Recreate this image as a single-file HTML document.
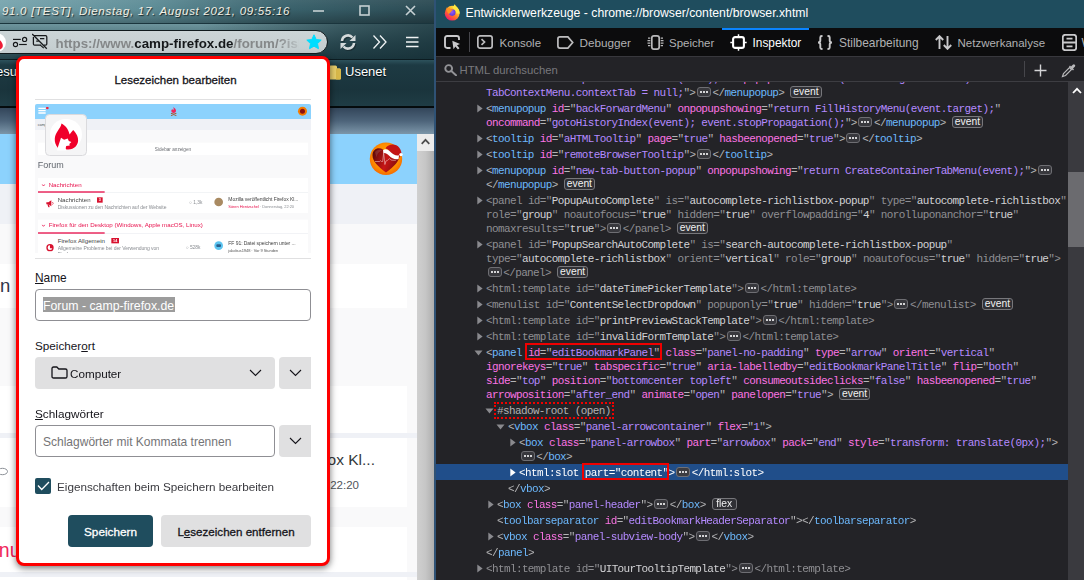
<!DOCTYPE html>
<html lang="de"><head><meta charset="utf-8"><title>Entwicklerwerkzeuge</title>
<style>
*{box-sizing:border-box}
html,body{margin:0;padding:0}
body{width:1084px;height:580px;overflow:hidden;position:relative;background:#232327;font-family:"Liberation Sans",sans-serif}
.abs,#left *,#dev *{position:absolute}
#left{position:absolute;left:0;top:0;width:434px;height:580px;overflow:hidden;background:#f9f9fa}
#gap{position:absolute;left:434px;top:0;width:2px;height:580px;background:#2f5275}
#dev{position:absolute;left:436px;top:0;width:648px;height:580px;overflow:hidden;background:#232327}
/* ---- left window chrome ---- */
#tbar{left:0;top:0;width:434px;height:24px;background:linear-gradient(90deg,#78a5ae 0%,#5d8c96 35%,#3a626c 65%,#2b4a53 100%)}
#tbar .sh{left:0;top:0;width:434px;height:24px;background:linear-gradient(180deg,rgba(255,255,255,.05) 0%,rgba(0,0,0,0) 40%,rgba(0,0,0,.28) 100%)}
#ttl{left:2px;top:3px;white-space:nowrap;font-style:italic;font-size:11.5px;line-height:16px;color:#f3f0e4;text-shadow:1px 1px 1px rgba(0,0,0,.7);letter-spacing:.71px}
#nav{left:0;top:23px;width:434px;height:37px;background:linear-gradient(180deg,#1a353d 0,#1a353d 1px,#6e959d 1px,#5f868e 7px,#3f636c 20px,#25434b 36px,#0c1c21 36px)}
#nav .rt{left:200px;top:1px;width:234px;height:35px;background:linear-gradient(90deg,rgba(20,45,52,0) 0%,rgba(20,45,52,.55) 60%,rgba(20,45,52,.75) 100%)}
#url{left:-20px;top:30px;width:348px;height:24px;border:1px solid #101a1d;border-radius:12px;background:linear-gradient(180deg,#ccd5d7,#c4cdcf)}
#urlt{left:55.5px;top:34.5px;white-space:nowrap;font-weight:bold;font-size:13.33px;line-height:18px;color:#858889;width:243px;overflow:hidden;-webkit-mask-image:linear-gradient(90deg,#000 0,#000 222px,rgba(0,0,0,.15) 243px);mask-image:linear-gradient(90deg,#000 0,#000 222px,rgba(0,0,0,.15) 243px)}
#urlt b{position:static;color:#15181a}
#bm{left:0;top:60px;width:434px;height:48px;background:linear-gradient(180deg,#2d525c 0,#1d3a43 5px,#1a343c 30px,#1f3c45 46px,#050b0d 46px)}
.bmt{white-space:nowrap;font-size:13px;line-height:16px;color:#fff;text-shadow:0 1px 1px rgba(0,0,0,.8)}
#tabs{left:0;top:108px;width:434px;height:26px;background:linear-gradient(180deg,#33465a 0,#4d647a 50%,#7c96a9 100%)}
/* ---- page ---- */
#hdr{left:0;top:134px;width:417px;height:50px;background:#8cd2fd}
#band{left:0;top:184px;width:417px;height:40px;background:#eff1f6}
.card{left:0;width:407px;background:#fff}
.gapb{left:0;width:417px;background:#eff1f6}
#sb{left:417px;top:134px;width:17px;height:446px;background:linear-gradient(90deg,#d0d0d0 0,#c6c6c6 50%,#aeaeae 100%)}
#sbu{left:417px;top:134px;width:17px;height:17px;background:#ececec}
/* ---- panel ---- */
#pnl{left:16px;top:56px;width:314px;height:510px;border:3px solid #fe0000;border-radius:8px;background:#fff;box-shadow:0 2px 7px rgba(0,0,0,.55)}
#pnl .lb{white-space:nowrap;font-size:13px;line-height:16px;color:#15141a}
#pnl u{position:static}
.sep{height:1px;background:#e0e0e1}
.inp{border:1px solid #8f8f94;border-radius:4px;background:#fff}
.gbtn{background:#e0e0e1}
/* ---- devtools ---- */
#dtb{left:0;top:0;width:648px;height:28px;background:#1f4d5e}
#dtt{left:29.5px;top:5.1px;white-space:nowrap;font-size:12.24px;line-height:16px;color:#fff}
#tool{left:0;top:28px;width:648px;height:29px;background:#0c0c0d;border-bottom:1px solid #38383d}
.tab{white-space:nowrap;font-size:12px;line-height:16px;top:35px;color:#b1b1b3}
#srch{left:0;top:57px;width:648px;height:25px;background:#232327;border-bottom:1px solid #3d3d42}
#mk{left:0;top:82px;width:632px;height:498px;overflow:hidden}
#mk .in{left:0;top:-82px;width:632px;height:580px}
.ln{white-space:pre;font-family:"Liberation Mono",monospace;font-size:11px;letter-spacing:-.62px;line-height:14px;height:14px;color:#b4b4b6}
.ln span{position:static!important}
.t{color:#6cb8fc}.a{color:#fb74e4}.v{color:#b48aff}
.hd,.hd .t,.hd .a{color:#8f8f93}.hd .v{color:#d2d2d5}
.sl,.sl .t,.sl .a,.sl .v{color:#fff}
.sr{color:#b1b1b3}
.bd{display:inline-block;font-family:"Liberation Sans",sans-serif;font-size:10.3px;letter-spacing:0;line-height:10px;height:12px;padding:0 2px;margin-left:0;border:1px solid #77777b;border-radius:3px;color:#f0f0f1;vertical-align:top;background:#303035}
.ln .el{display:inline-block;width:14px;height:10px;border:1px solid #6e6e73;border-radius:3px;margin:1px 1.7px 0 1.5px;vertical-align:top;position:relative!important;background:#38383d}
.el i{position:absolute;top:3px;width:2px;height:2px;background:#d4d4d6}
.el i:nth-child(1){left:2px}.el i:nth-child(2){left:5px}.el i:nth-child(3){left:8px}
.sl .el{border-color:#707075;background:#3c3c41}
.rbx{border:2px solid #f00000}
.selbg{left:0;width:632px;height:16px;background:#204e8a}
.tw{fill:#8a8a8e}.sw{fill:#fff}
#dsb{left:632px;top:82px;width:16px;height:498px;background:#3a3a3f}
#dth{left:632px;top:172px;width:16px;height:75px;background:#6b6b6f}
</style></head>
<body>
<div id="left">
<div id="tbar"><div class="sh"></div></div>
<div id="ttl">91.0 [TEST], Dienstag, 17. August 2021, 09:55:16</div>
<!-- window buttons -->
<svg style="left:312px;top:4px" width="110" height="16" viewBox="0 0 110 16" fill="none" stroke="#c6d0d3" stroke-width="1.600"><path d="M1 7h11"/><rect x="48" y="2" width="9" height="9"/><path d="M94 2l9 9M103 2l-9 9"/></svg>
<div id="nav"><div class="rt"></div></div>
<div id="url"></div>
<!-- site icon (partial) -->
<div style="left:-13.500px;top:33px;width:19px;height:19px;border-radius:10px;background:#fff"></div>
<svg style="left:-4.500px;top:39px" width="8" height="10.500" viewBox="0 0 9 13"><path d="M3 0c3 3 5 5 5 8.500c0 3-2 4.500-5 4.500c-4 0-5-3-5-5c0-3 3-4 5-8z" fill="#ee1d36"/></svg>
<!-- permissions icon -->
<svg style="left:12px;top:36px" width="16" height="12" viewBox="0 0 16 12" fill="none" stroke="#16191b" stroke-width="1.150"><path d="M1 3.400h7.800"/><circle cx="12.600" cy="3.400" r="2.100"/><circle cx="3.500" cy="8.500" r="2.100"/><path d="M7.100 8.500h7.700"/></svg>
<!-- blocked icon -->
<svg style="left:32px;top:33px" width="16" height="17" viewBox="0 0 16 17" fill="none" stroke="#16191b" stroke-width="1.250" stroke-linejoin="round"><path d="M2 2.700h11.600q1.200 0 1.200 1.200v7q0 1.200-1.200 1.200h-1.800"/><path d="M9 12.100H2.600q-1.200 0-1.200-1.200V3.900"/><path d="M8.300 12.100l3.500 3"/><path d="M8 5.500h4.300M4.200 8.200h2.600"/><path d="M.2 1l14.600 14.800"/></svg>
<div id="urlt">https://www.<b>camp-firefox.de</b>/forum/?isDesktop=1</div>
<!-- star -->
<svg style="left:306px;top:34px" width="16" height="16" viewBox="0 0 16 16"><path d="M8 .8l2.200 4.700 5 .6-3.700 3.500 1 5.100L8 12.200 3.500 14.700l1-5.100L.8 6.100l5-.6z" fill="#00ddff" stroke="#00ddff" stroke-width="1" stroke-linejoin="round"/></svg>
<!-- reload -->
<svg style="left:339px;top:33px" width="18" height="18" viewBox="0 0 18 18" fill="none"><g stroke="#16262b" stroke-width="3" opacity=".6" transform="translate(1 1)"><path d="M3 8a6 6 0 0 1 10.500-3.500"/><path d="M15 10a6 6 0 0 1-10.500 3.500"/></g><g stroke="#d5dadb" stroke-width="2.600"><path d="M3 8a6 6 0 0 1 10.500-3.500"/><path d="M15 10a6 6 0 0 1-10.500 3.500"/></g><path d="M16.500 2v6h-6z" fill="#d5dadb"/><path d="M1.500 16v-6h6z" fill="#d5dadb"/></svg>
<!-- chevrons -->
<svg style="left:372px;top:34px" width="16" height="16" viewBox="0 0 16 16" fill="none" stroke="#f0f3f4" stroke-width="1.300"><path d="M1.500 1.500l6 6.500-6 6.500"/><path d="M8 1.500l6 6.500-6 6.500"/></svg>
<!-- hamburger -->
<svg style="left:405px;top:35px" width="15" height="14" viewBox="0 0 15 14" stroke="#f0f3f4" stroke-width="1.400"><path d="M1 2.500h12.500M1 7h12.500M1 11.500h12.500"/></svg>
<div id="bm"></div>
<div class="bmt" style="left:-4px;top:64.300px">esucht</div>
<svg style="left:329px;top:64px" width="12" height="17" viewBox="0 0 12 17"><path d="M0 3q0-1.500 1.500-1.500h5q1.500 0 1.500 1.500v1.500h2.500q1.500 0 1.500 1.500v8q0 1.500-1.500 1.500h-10.500z" fill="#e9cf6a"/><path d="M7 4.500h3.500q1.500 0 1.500 1.500v8q0 1.500-1.500 1.500h-3.500z" fill="#d8b84a"/></svg>
<div class="bmt" style="left:345px;top:64.300px">Usenet</div>
<div id="tabs"></div>
<!-- page -->
<div id="hdr"></div>
<div id="band"></div>
<div class="card" style="top:264px;height:44px"></div>
<div class="abs" style="left:0;top:274.600px;font-size:18.500px;line-height:22px;color:#2f3447">n</div>
<div class="card" style="top:386px;height:47px"></div>
<div class="gapb" style="top:433px;height:5px"></div>
<div class="card" style="top:438px;height:69px"></div>
<div class="card" style="top:527px;height:45px"></div>
<div class="gapb" style="top:572px;height:5px"></div>
<div class="card" style="top:577px;height:10px"></div>
<svg style="left:-3px;top:467px" width="12" height="10" viewBox="0 0 12 10" fill="none" stroke="#8a8f96" stroke-width="1"><ellipse cx="5.500" cy="4.500" rx="5" ry="3.200"/></svg>
<div class="abs" style="left:-1.200px;top:537.500px;font-size:19.500px;line-height:24px;color:#f0245a">nu</div>
<div class="abs" style="left:300px;top:449px;width:75px;text-align:right;white-space:nowrap;font-size:15.5px;line-height:22px;color:#33373a">ox Kl...</div>
<div class="abs" style="left:300px;top:477px;width:59px;text-align:right;white-space:nowrap;font-size:11.5px;line-height:16px;color:#50555a">22:20</div>
<!-- avatar -->
<svg style="left:369px;top:142px" width="34" height="34" viewBox="0 0 34 34"><defs><radialGradient id="ag" cx=".5" cy=".45" r=".55"><stop offset="0" stop-color="#ffb000"/><stop offset=".7" stop-color="#ff9000"/><stop offset="1" stop-color="#f56c00"/></radialGradient><linearGradient id="hg" x1="0" y1="0" x2="1" y2=".3"><stop offset="0" stop-color="#4e0707"/><stop offset=".3" stop-color="#8c1010"/><stop offset=".6" stop-color="#c81616"/><stop offset="1" stop-color="#8a0e0e"/></linearGradient></defs><circle cx="17" cy="16.800" r="16.200" fill="url(#ag)"/><path d="M17 30.500C8.500 24 3.500 19 3.500 13.200C3.500 9 6.500 6.300 10 6.300c3 0 5.200 1.600 7 4.200c1.800-2.600 4-4.200 7-4.200c3.500 0 6.500 2.700 6.500 6.900C30.500 19 25.500 24 17 30.500z" fill="url(#hg)"/><path d="M6 10c2-2.500 5-3 7.500-1.500c-3 .5-5.500 3-6 7z" fill="#fff" opacity=".12"/><path d="M16.500 6.200C19.500 1.800 27 1.200 30.300 5.800C32.300 8.600 32.800 11 32.200 13.200L29.200 16.800C25.500 11.500 20.500 8.300 16.500 6.200Z" fill="#c41414"/><path d="M14 8.200C16.800 6.200 19.300 7.800 21.800 10.300C24.300 12.800 27 14 30 13.300L29.600 16.900C26 17.800 22.700 16.200 20.200 13.700C17.800 11.300 16.200 10.700 14.400 11.100Z" fill="#fff"/><circle cx="32" cy="12.600" r="1.700" fill="#fff"/><path d="M6 19.500h4.500l1-.8 1 .8h1.200l1-9 1.200 12 1-3.500 1.500-.5 2-2 1.500 1.500 2 .3h3" fill="none" stroke="#f4d4d4" stroke-width=".6" opacity=".9"/></svg>
<!-- scrollbar -->
<div id="sb"></div><div id="sbu"></div>
<svg style="left:421px;top:138px" width="9" height="7" viewBox="0 0 9 7" fill="none" stroke="#4c4c4c" stroke-width="1.700"><path d="M.7 5.800l3.800-4 3.800 4"/></svg>
<div id="pnl">
<div class="lb" id="ptitle" style="left:0;top:12.8px;width:313px;text-align:center;font-size:11.5px;-webkit-text-stroke:.3px #15141a">Lesezeichen bearbeiten</div>
<div class="sep" style="left:16px;top:40px;width:276px"></div>
<div id="thumb" style="left:16px;top:45px;width:276px;height:149px;overflow:hidden;background:#f9f9fa;border-radius:2px 2px 0 0">
<div id="th3" style="left:0;top:0;width:828px;height:447px;transform:scale(.33333);transform-origin:0 0;font-size:13px;color:#444">
<div style="left:0;top:0;width:828px;height:45px;background:#8cd2fd"></div>
<div style="left:0;top:45px;width:828px;height:33px;background:#eff1f6"></div>
<div style="left:8px;top:56px;font-size:11px;line-height:14px;color:#50555a">camp-fi</div>
<svg style="left:9px;top:8px" width="36" height="24" viewBox="0 0 36 24"><path d="M1 5h22M1 12h22M1 19h22" stroke="#fff" stroke-width="4"/><circle cx="28" cy="4" r="4" fill="#f0243c"/></svg>
<svg style="left:406px;top:9px" width="20" height="27" viewBox="0 0 20 27"><path d="M9 0c5 4 8 7 8 11.500c0 4-3 6.500-7 6.500s-7-2.500-7-6.500c0-2.500 1.500-4 3-5.500c.5 2 1.500 3 3 3.500c1.500-3 1-6 0-9.500z" fill="#f0245a"/><path d="M2 18.500l16 7M18 18.500l-16 7" stroke="#a8572e" stroke-width="3.500"/></svg>
<div style="left:789px;top:8px;width:27px;height:27px;border-radius:14px;background:#f47a00"></div>
<div style="left:795px;top:14px;width:15px;height:15px;border-radius:8px;background:#8a1010"></div>
<div style="left:9px;top:116px;width:810px;height:37px;background:#fff"></div>
<div style="left:9px;top:127px;width:810px;text-align:center;font-size:14px;line-height:16px;color:#6a6d72">Sidebar anzeigen</div>
<div style="left:8px;top:168px;font-size:27px;line-height:32px;color:#62676e">Forum</div>
<!-- section 1 -->
<div style="left:9px;top:222px;width:810px;height:105px;background:#fff"></div>
<div style="left:9px;top:264px;width:810px;height:2px;background:#eceef2"></div>
<div style="left:9px;top:262px;width:200px;height:4px;background:#e8124d"></div>
<svg style="left:20px;top:240px" width="11" height="8" viewBox="0 0 11 8" fill="none" stroke="#e8124d" stroke-width="2.500"><path d="M1 1l4.500 5L10 1"/></svg>
<div style="left:41px;top:233px;font-size:18.5px;line-height:20px;color:#e8124d;white-space:nowrap">Nachrichten</div>
<svg style="left:32px;top:287px" width="26" height="24" viewBox="0 0 26 24" fill="#d8122f"><path d="M2 8h6l9-6v18l-9-6H2z"/><path d="M5 14h5l2 9H8z"/><path d="M20 7a5 5 0 0 1 0 8" fill="none" stroke="#d8122f" stroke-width="2"/></svg>
<div style="left:68px;top:278px;font-size:18.5px;line-height:20px;color:#444;white-space:nowrap">Nachrichten</div>
<div style="left:186px;top:280px;width:17px;height:16px;background:#d8122f;color:#fff;font-size:11px;line-height:16px;text-align:center;font-weight:bold">3</div>
<div style="left:68px;top:301px;font-size:15.2px;line-height:16px;color:#8a8d92;white-space:nowrap;letter-spacing:-.2px">Diskussionen zu den Nachrichten auf der Website</div>
<div style="left:462px;top:287px;font-size:14.500px;line-height:16px;color:#8a8d92;white-space:nowrap">○ 1,3k</div>
<div style="left:538px;top:281px;width:26px;height:26px;border-radius:13px;background:#a98a62"></div>
<div style="left:580px;top:277px;font-size:15.1px;line-height:16px;color:#444;white-space:nowrap;letter-spacing:-.2px">Mozilla veröffentlicht Firefox Kl...</div>
<div style="left:580px;top:300px;font-size:12px;line-height:14px;color:#8a8d92;white-space:nowrap;letter-spacing:-.2px"><span style="position:static;color:#e8124d">Sören Hentzschel</span> · Donnerstag, 22:20</div>
<!-- section 2 -->
<div style="left:9px;top:347px;width:810px;height:110px;background:#fff"></div>
<div style="left:9px;top:388px;width:810px;height:2px;background:#eceef2"></div>
<div style="left:9px;top:385px;width:200px;height:4px;background:#e8124d"></div>
<svg style="left:20px;top:361px" width="11" height="8" viewBox="0 0 11 8" fill="none" stroke="#e8124d" stroke-width="2.500"><path d="M1 1l4.500 5L10 1"/></svg>
<div style="left:41px;top:354px;font-size:18.5px;line-height:20px;color:#e8124d;white-space:nowrap">Firefox für den Desktop (Windows, Apple macOS, Linux)</div>
<svg style="left:32.500px;top:419px" width="24" height="24" viewBox="0 0 24 24"><circle cx="12" cy="12" r="11" fill="#d8122f"/><path d="M12 5a7 7 0 1 0 7 7c-2 3-6 3-7 0c-1-3 1-5 0-7z" fill="#fff"/></svg>
<div style="left:68px;top:400px;font-size:18.5px;line-height:20px;color:#444;white-space:nowrap">Firefox Allgemein</div>
<div style="left:229px;top:402px;width:23px;height:16px;background:#d8122f;color:#fff;font-size:11px;line-height:16px;text-align:center;font-weight:bold">14</div>
<div style="left:68px;top:424px;font-size:15.2px;line-height:16px;color:#8a8d92;white-space:nowrap;letter-spacing:-.2px">Allgemeine Probleme bei der Verwendung von</div>
<div style="left:68px;top:444px;font-size:15.2px;line-height:16px;color:#8a8d92;white-space:nowrap">Firefox</div>
<div style="left:452px;top:423px;font-size:14.500px;line-height:16px;color:#8a8d92;white-space:nowrap">○ 528k</div>
<div style="left:538px;top:412px;width:26px;height:26px;border-radius:13px;background:#5cc4f0"></div>
<div style="left:544px;top:421px;width:14px;height:8px;border-radius:3px;background:#2a5f8c"></div>
<div style="left:580px;top:411px;font-size:15.1px;line-height:16px;color:#444;white-space:nowrap;letter-spacing:-.2px">FF 91: Datei speichern unter ...</div>
<div style="left:580px;top:434px;font-size:12px;line-height:14px;color:#555;white-space:nowrap;letter-spacing:-.2px">jakobus1948 · Vor 9 Stunden</div>
</div>
<!-- favicon box -->
<div style="left:10.200px;top:10.200px;width:41.800px;height:41.600px;border:1px solid #dadadd;border-radius:4.500px;background:#f5f5f6"></div>
<div style="left:15.300px;top:14.800px;width:31.500px;height:31.500px;border-radius:16px;background:#fff"></div>
<svg style="left:19px;top:19px" width="26" height="28" viewBox="0 0 26 28"><path d="M7.500 .6C11 2.500 14.500 6 15.600 11.500C16.500 10 18 8.500 19.200 7C21.500 9.500 24.300 13 24.100 17.500C24 22 20.500 26.400 14.300 26.400C10 26.600 6 26 3.700 24.800C1.500 22 .5 19 .8 15.300C1.500 9 6.500 6 7.500 .6Z" fill="#f0002a"/><path d="M3.700 24.800L7 14.700L10.100 16.800L13.700 15.500L14.800 17.900L17.400 18.900L15.300 21L15.800 22.500L12.200 23L11.700 25.300L12.500 27.500L3 27.500Z" fill="#fff"/></svg>

</div>
<div class="sep" style="left:16px;top:199px;width:276px"></div>
<div class="lb" id="l1" style="left:16px;top:210.9px;font-size:11.88px"><u>N</u>ame</div>
<div class="inp" style="left:16px;top:230px;width:276px;height:32px"></div>
<div style="left:24px;top:238px;width:131.500px;height:15px;background:#9c9c9c"></div>
<div class="lb" id="l2" style="left:24px;top:238.9px;color:#fff;font-size:12.3px">Forum - camp-firefox.de</div>
<div class="lb" id="l3" style="left:16px;top:278.9px;font-size:11.73px">Speicher<u>o</u>rt</div>
<div class="gbtn" style="left:16px;top:298px;width:240px;height:32px;border-radius:4px"></div>
<svg style="left:32px;top:306.700px" width="17" height="13" viewBox="0 0 17 13" fill="none" stroke="#15141a" stroke-width="1.300"><path d="M1 2.600q0-1.600 1.600-1.600h3.200l2 2h6.600q1.600 0 1.600 1.600v5.800q0 1.600-1.600 1.600h-11.800q-1.600 0-1.600-1.600z"/></svg>
<div class="lb" id="l4" style="left:51px;top:306.85px;font-size:11.68px">Computer</div>
<svg style="left:230px;top:310px" width="13" height="8" viewBox="0 0 13 8" fill="none" stroke="#15141a" stroke-width="1.100"><path d="M1 1l5.500 5.500L12 1"/></svg>
<div class="gbtn" style="left:260px;top:298px;width:32px;height:32px;border-radius:4px 0 0 4px"></div>
<svg style="left:269.500px;top:310px" width="13" height="8" viewBox="0 0 13 8" fill="none" stroke="#15141a" stroke-width="1.100"><path d="M1 1l5.500 5.500L12 1"/></svg>
<div class="lb" id="l5" style="left:16px;top:346.8px;font-size:11.77px"><u>S</u>chlagwörter</div>
<div class="inp" style="left:16px;top:366px;width:240px;height:32px"></div>
<div class="lb" id="l6" style="left:24px;top:374.7px;color:#747476;font-size:12.02px">Schlagwörter mit Kommata trennen</div>
<div class="gbtn" style="left:260px;top:366px;width:32px;height:32px;border-radius:4px 0 0 4px"></div>
<svg style="left:269.500px;top:378px" width="13" height="8" viewBox="0 0 13 8" fill="none" stroke="#15141a" stroke-width="1.100"><path d="M1 1l5.500 5.500L12 1"/></svg>
<div style="left:16px;top:419px;width:16px;height:16px;border-radius:2px;background:#1f4d5e"></div>
<svg style="left:17.500px;top:422px" width="13" height="10" viewBox="0 0 13 10" fill="none" stroke="#fff" stroke-width="1.300"><path d="M1 4.500l3.700 4L12 1"/></svg>
<div class="lb" id="l7" style="left:38px;top:420.25px;color:#3a3a3f;font-size:11.7px">Ei<u>g</u>enschaften beim Speichern bearbeiten</div>
<div style="left:49px;top:456px;width:85px;height:32px;border-radius:4px;background:#1f4d5e"></div>
<div class="lb" id="l8" style="left:49px;top:465px;width:85px;text-align:center;color:#fff;-webkit-text-stroke:.3px #fff;font-size:11.75px">Speichern</div>
<div class="gbtn" style="left:142px;top:456px;width:150px;height:32px;border-radius:4px"></div>
<div class="lb" id="l9" style="left:142px;top:465px;width:150px;text-align:center;-webkit-text-stroke:.3px #15141a;font-size:11.59px">L<u>e</u>sezeichen entfernen</div>
</div>


</div>
<div id="gap"></div>
<div id="dev">
<div id="dtb"></div>
<!-- firefox logo -->
<svg style="left:8px;top:3.500px" width="17" height="17" viewBox="0 0 17 17"><defs><linearGradient id="fx1" x1=".95" y1=".1" x2=".25" y2="1"><stop offset="0" stop-color="#fff44f"/><stop offset=".3" stop-color="#ffc12e"/><stop offset=".6" stop-color="#ff6d2a"/><stop offset="1" stop-color="#f5136f"/></linearGradient><radialGradient id="fx2" cx=".45" cy=".4" r=".6"><stop offset="0" stop-color="#9a5cf5"/><stop offset="1" stop-color="#5a38de"/></radialGradient></defs><circle cx="8.200" cy="9.200" r="7.400" fill="url(#fx1)"/><path d="M10.600 .3C12 2.500 15.800 4.500 15.800 9.500L12.500 9.500C12.500 6.500 9.200 5.500 8.600 3.200C9.200 2.200 10.200 1.300 10.600 .3Z" fill="#ffe640"/><circle cx="8.200" cy="8.600" r="3.300" fill="url(#fx2)"/><path d="M2.400 3.500L4.200 4.500L5.400 4C6.200 5.200 7.700 5.400 9.400 5.600C8.800 6.800 7.400 6.600 7.200 7.800L5 10C3.200 8.500 2.600 6 2.400 3.500Z" fill="#ff9422"/></svg>
<div id="dtt">Entwicklerwerkzeuge - chrome://browser/content/browser.xhtml</div>
<div id="tool"></div>
<div style="left:286px;top:28px;width:87px;height:2px;background:#0a84ff"></div>
<!-- picker -->
<svg style="left:8px;top:35px" width="17" height="15" viewBox="0 0 17 15" fill="none"><path d="M6.500 13H3.200Q1 13 1 10.800V3.200Q1 1 3.200 1h9.600Q15 1 15 3.200V5" stroke="#c9c9cb" stroke-width="1.900"/><path d="M8.300 5.800l7.700 3.300-3 1.200 2.500 3-1.600 1.300-2.500-3-1.900 2.700z" fill="#c9c9cb"/></svg>
<div style="left:32.500px;top:32px;width:1px;height:20px;background:#46464b"></div>
<!-- console -->
<svg style="left:41px;top:35px" width="16" height="14" viewBox="0 0 16 14" fill="none" stroke="#bdbdbf" stroke-width="1.700"><rect x=".85" y=".85" width="14.300" height="12.300" rx="2.200"/><path d="M4.500 4.200l3 2.800-3 2.800"/></svg>
<div class="tab" id="t1" style="left:63.500px;font-size:11.5px">Konsole</div>
<!-- debugger -->
<svg style="left:120.500px;top:35.500px" width="17" height="13" viewBox="0 0 17 13" fill="none" stroke="#bdbdbf" stroke-width="1.700"><path d="M2.900.9h8l4.800 5.600-4.800 5.600H2.900q-2 0-2-2V2.900q0-2 2-2z"/></svg>
<div class="tab" id="t2" style="left:143.500px;font-size:11.72px">Debugger</div>
<!-- memory -->
<svg style="left:211px;top:35px" width="17" height="15" viewBox="0 0 17 15" fill="none" stroke="#b9b9bb"><rect x="4.800" y=".9" width="7.400" height="13.200" rx="2.200" stroke-width="1.700"/><path d="M1 3.200h2.300M.5 5.700h2.800M.5 8.200h2.800M1 10.700h2.300M13.700 3.200h2.300M13.700 5.700h2.800M13.700 8.200h2.800M13.700 10.700h2.300" stroke-width="1.200"/></svg>
<div class="tab" id="t3" style="left:233px;font-size:11.47px">Speicher</div>
<!-- inspector -->
<svg style="left:294px;top:34px" width="17" height="17" viewBox="0 0 17 17" fill="none" stroke="#fff"><rect x="3.100" y="3.100" width="10.800" height="10.800" rx="2" stroke-width="2.100"/><path d="M8.500 .3v2.500M8.500 14.200v2.500M.3 8.500h2.500M14.200 8.500h2.500" stroke-width="1.500"/></svg>
<div class="tab" id="t4" style="left:316.500px;color:#fff;font-size:11.86px">Inspektor</div>
<!-- style editor -->
<svg style="left:381px;top:35px" width="16" height="15" viewBox="0 0 16 15" fill="none" stroke="#c9c9cb" stroke-width="1.900"><path d="M5.500 1H4.800Q3.300 1 3.300 2.500v3Q3.300 7.500 1 7.500Q3.300 7.500 3.300 9.500v3Q3.300 14 4.800 14h.7"/><path d="M10.500 1h.7q1.500 0 1.500 1.500v3q0 2 2.300 2q-2.300 0-2.300 2v3q0 1.500-1.500 1.500h-.7"/></svg>
<div class="tab" id="t5" style="left:403px;font-size:11.95px">Stilbearbeitung</div>
<!-- network -->
<svg style="left:499px;top:35px" width="17" height="15" viewBox="0 0 17 15" fill="none" stroke="#c9c9cb" stroke-width="1.900"><path d="M4.500 14V1.500M.8 5l3.700-3.800L8.200 5"/><path d="M12.500 1v12.500M8.800 10l3.700 3.800 3.700-3.800"/></svg>
<div class="tab" id="t6" style="left:521.500px;font-size:11.5px">Netzwerkanalyse</div>
<!-- storage -->
<svg style="left:626px;top:34px" width="15" height="17" viewBox="0 0 15 17" fill="none" stroke="#c9c9cb" stroke-width="1.800"><rect x=".8" y=".8" width="13.400" height="15.400" rx="2.500"/><path d="M.8 8.500h13.400M4.500 4.600h6M4.500 12.400h6"/></svg>
<div class="tab" style="left:645.500px">Web-Speicher</div>
<div id="srch"></div>
<svg style="left:8px;top:64px" width="13" height="12" viewBox="0 0 13 12" fill="none" stroke="#939397" stroke-width="1.900"><circle cx="4.700" cy="4.500" r="3.400"/><path d="M7.300 7l4.700 4.300" stroke-linecap="round"/></svg>
<div class="tab" id="t7" style="left:23.500px;top:62.4px;color:#78787d;font-size:11.32px">HTML durchsuchen</div>
<div style="left:588px;top:61px;width:1px;height:16px;background:#46464b"></div>
<svg style="left:598px;top:64px" width="13" height="13" viewBox="0 0 13 13" stroke="#d4d4d6" stroke-width="1.400"><path d="M6.500 .5v12M.5 6.500h12"/></svg>
<svg style="left:625px;top:63px" width="15" height="15" viewBox="0 0 15 15" fill="none"><path d="M1.500 13.500l1-3 6-6 2 2-6 6z" stroke="#b9b9bb" stroke-width="1.200"/><path d="M8 3.500l1-1 1 1 1.800-1.800q1-1 2 0t0 2L12 5.500l1 1-1 1z" fill="#b9b9bb"/></svg>
<div id="mk"><div class="in">
<div class="ln" style="left:50.0px;top:72px"><span class="v">TabContextMenu.updateContextMenu(this);</span>&quot; <span class="a">onpopuphidden</span>=&quot;<span class="v">if (event.target == this)</span></div>
<div class="ln" style="left:50.0px;top:86px"><span class="v">TabContextMenu.contextTab = null;</span>&quot;&gt;<span class="el"><i></i><i></i><i></i></span>&lt;/<span class="t">menupopup</span>&gt; <span class="bd">event</span></div>
<svg class="tw" style="left:40.7px;top:103.6px" width="6" height="9" viewBox="0 0 6 9"><path d="M0.3 0.4 L5.6 4.5 L0.3 8.6Z"/></svg>
<div class="ln" style="left:50.0px;top:102px">&lt;<span class="t">menupopup</span> <span class="a">id</span>=&quot;<span class="v">backForwardMenu</span>&quot; <span class="a">onpopupshowing</span>=&quot;<span class="v">return FillHistoryMenu(event.target);</span>&quot;</div>
<div class="ln" style="left:50.0px;top:116px"><span class="a">oncommand</span>=&quot;<span class="v">gotoHistoryIndex(event); event.stopPropagation();</span>&quot;&gt;<span class="el"><i></i><i></i><i></i></span>&lt;/<span class="t">menupopup</span>&gt; <span class="bd">event</span></div>
<svg class="tw" style="left:40.7px;top:133.6px" width="6" height="9" viewBox="0 0 6 9"><path d="M0.3 0.4 L5.6 4.5 L0.3 8.6Z"/></svg>
<div class="ln" style="left:50.0px;top:132px">&lt;<span class="t">tooltip</span> <span class="a">id</span>=&quot;<span class="v">aHTMLTooltip</span>&quot; <span class="a">page</span>=&quot;<span class="v">true</span>&quot; <span class="a">hasbeenopened</span>=&quot;<span class="v">true</span>&quot;&gt;<span class="el"><i></i><i></i><i></i></span>&lt;/<span class="t">tooltip</span>&gt;</div>
<svg class="tw" style="left:40.7px;top:149.6px" width="6" height="9" viewBox="0 0 6 9"><path d="M0.3 0.4 L5.6 4.5 L0.3 8.6Z"/></svg>
<div class="ln" style="left:50.0px;top:148px">&lt;<span class="t">tooltip</span> <span class="a">id</span>=&quot;<span class="v">remoteBrowserTooltip</span>&quot;&gt;<span class="el"><i></i><i></i><i></i></span>&lt;/<span class="t">tooltip</span>&gt;</div>
<svg class="tw" style="left:40.7px;top:165.6px" width="6" height="9" viewBox="0 0 6 9"><path d="M0.3 0.4 L5.6 4.5 L0.3 8.6Z"/></svg>
<div class="ln" style="left:50.0px;top:164px">&lt;<span class="t">menupopup</span> <span class="a">id</span>=&quot;<span class="v">new-tab-button-popup</span>&quot; <span class="a">onpopupshowing</span>=&quot;<span class="v">return CreateContainerTabMenu(event);</span>&quot;&gt;<span class="el"><i></i><i></i><i></i></span></div>
<div class="ln" style="left:50.0px;top:178px">&lt;/<span class="t">menupopup</span>&gt; <span class="bd">event</span></div>
<svg class="tw" style="left:40.7px;top:195.6px" width="6" height="9" viewBox="0 0 6 9"><path d="M0.3 0.4 L5.6 4.5 L0.3 8.6Z"/></svg>
<div class="ln hd" style="left:50.0px;top:194px">&lt;<span class="t">panel</span> <span class="a">id</span>=&quot;<span class="v">PopupAutoComplete</span>&quot; <span class="a">is</span>=&quot;<span class="v">autocomplete-richlistbox-popup</span>&quot; <span class="a">type</span>=&quot;<span class="v">autocomplete-richlistbox</span>&quot;</div>
<div class="ln hd" style="left:50.0px;top:208px"><span class="a">role</span>=&quot;<span class="v">group</span>&quot; <span class="a">noautofocus</span>=&quot;<span class="v">true</span>&quot; <span class="a">hidden</span>=&quot;<span class="v">true</span>&quot; <span class="a">overflowpadding</span>=&quot;<span class="v">4</span>&quot; <span class="a">norolluponanchor</span>=&quot;<span class="v">true</span>&quot;</div>
<div class="ln hd" style="left:50.0px;top:222px"><span class="a">nomaxresults</span>=&quot;<span class="v">true</span>&quot;&gt;<span class="el"><i></i><i></i><i></i></span>&lt;/<span class="t">panel</span>&gt; <span class="bd">event</span></div>
<svg class="tw" style="left:40.7px;top:239.6px" width="6" height="9" viewBox="0 0 6 9"><path d="M0.3 0.4 L5.6 4.5 L0.3 8.6Z"/></svg>
<div class="ln hd" style="left:50.0px;top:238px">&lt;<span class="t">panel</span> <span class="a">id</span>=&quot;<span class="v">PopupSearchAutoComplete</span>&quot; <span class="a">is</span>=&quot;<span class="v">search-autocomplete-richlistbox-popup</span>&quot;</div>
<div class="ln hd" style="left:50.0px;top:252px"><span class="a">type</span>=&quot;<span class="v">autocomplete-richlistbox</span>&quot; <span class="a">orient</span>=&quot;<span class="v">vertical</span>&quot; <span class="a">role</span>=&quot;<span class="v">group</span>&quot; <span class="a">noautofocus</span>=&quot;<span class="v">true</span>&quot; <span class="a">hidden</span>=&quot;<span class="v">true</span>&quot;&gt;</div>
<div class="ln hd" style="left:50.0px;top:266px"><span class="el"><i></i><i></i><i></i></span>&lt;/<span class="t">panel</span>&gt; <span class="bd">event</span></div>
<svg class="tw" style="left:40.7px;top:283.6px" width="6" height="9" viewBox="0 0 6 9"><path d="M0.3 0.4 L5.6 4.5 L0.3 8.6Z"/></svg>
<div class="ln hd" style="left:50.0px;top:282px">&lt;<span class="t">html:template</span> <span class="a">id</span>=&quot;<span class="v">dateTimePickerTemplate</span>&quot;&gt;<span class="el"><i></i><i></i><i></i></span>&lt;/<span class="t">html:template</span>&gt;</div>
<svg class="tw" style="left:40.7px;top:299.6px" width="6" height="9" viewBox="0 0 6 9"><path d="M0.3 0.4 L5.6 4.5 L0.3 8.6Z"/></svg>
<div class="ln hd" style="left:50.0px;top:298px">&lt;<span class="t">menulist</span> <span class="a">id</span>=&quot;<span class="v">ContentSelectDropdown</span>&quot; <span class="a">popuponly</span>=&quot;<span class="v">true</span>&quot; <span class="a">hidden</span>=&quot;<span class="v">true</span>&quot;&gt;<span class="el"><i></i><i></i><i></i></span>&lt;/<span class="t">menulist</span>&gt; <span class="bd">event</span></div>
<svg class="tw" style="left:40.7px;top:315.6px" width="6" height="9" viewBox="0 0 6 9"><path d="M0.3 0.4 L5.6 4.5 L0.3 8.6Z"/></svg>
<div class="ln hd" style="left:50.0px;top:314px">&lt;<span class="t">html:template</span> <span class="a">id</span>=&quot;<span class="v">printPreviewStackTemplate</span>&quot;&gt;<span class="el"><i></i><i></i><i></i></span>&lt;/<span class="t">html:template</span>&gt;</div>
<svg class="tw" style="left:40.7px;top:331.6px" width="6" height="9" viewBox="0 0 6 9"><path d="M0.3 0.4 L5.6 4.5 L0.3 8.6Z"/></svg>
<div class="ln hd" style="left:50.0px;top:330px">&lt;<span class="t">html:template</span> <span class="a">id</span>=&quot;<span class="v">invalidFormTemplate</span>&quot;&gt;<span class="el"><i></i><i></i><i></i></span>&lt;/<span class="t">html:template</span>&gt;</div>
<svg class="tw" style="left:38.0px;top:349.6px" width="9" height="6" viewBox="0 0 9 6"><path d="M0.5 0.5 L8.5 0.5 L4.5 5.5Z"/></svg>
<div class="ln" style="left:50.0px;top:346px">&lt;<span class="t">panel</span> <span><span class="a">id</span>=&quot;<span class="v">editBookmarkPanel</span>&quot;</span> <span class="a">class</span>=&quot;<span class="v">panel-no-padding</span>&quot; <span class="a">type</span>=&quot;<span class="v">arrow</span>&quot; <span class="a">orient</span>=&quot;<span class="v">vertical</span>&quot;</div>
<div class="ln" style="left:50.0px;top:360px"><span class="a">ignorekeys</span>=&quot;<span class="v">true</span>&quot; <span class="a">tabspecific</span>=&quot;<span class="v">true</span>&quot; <span class="a">aria-labelledby</span>=&quot;<span class="v">editBookmarkPanelTitle</span>&quot; <span class="a">flip</span>=&quot;<span class="v">both</span>&quot;</div>
<div class="ln" style="left:50.0px;top:374px"><span class="a">side</span>=&quot;<span class="v">top</span>&quot; <span class="a">position</span>=&quot;<span class="v">bottomcenter topleft</span>&quot; <span class="a">consumeoutsideclicks</span>=&quot;<span class="v">false</span>&quot; <span class="a">hasbeenopened</span>=&quot;<span class="v">true</span>&quot;</div>
<div class="ln" style="left:50.0px;top:388px"><span class="a">arrowposition</span>=&quot;<span class="v">after_end</span>&quot; <span class="a">animate</span>=&quot;<span class="v">open</span>&quot; <span class="a">panelopen</span>=&quot;<span class="v">true</span>&quot;&gt; <span class="bd">event</span></div>
<svg class="tw" style="left:49.0px;top:407.6px" width="9" height="6" viewBox="0 0 9 6"><path d="M0.5 0.5 L8.5 0.5 L4.5 5.5Z"/></svg>
<div class="ln" style="left:61.0px;top:404px"><span><span class="sr">#shadow-root (open)</span></span></div>
<svg class="tw" style="left:60.0px;top:423.6px" width="9" height="6" viewBox="0 0 9 6"><path d="M0.5 0.5 L8.5 0.5 L4.5 5.5Z"/></svg>
<div class="ln" style="left:72.0px;top:420px">&lt;<span class="t">vbox</span> <span class="a">class</span>=&quot;<span class="v">panel-arrowcontainer</span>&quot; <span class="a">flex</span>=&quot;<span class="v">1</span>&quot;&gt;</div>
<svg class="tw" style="left:73.7px;top:437.6px" width="6" height="9" viewBox="0 0 6 9"><path d="M0.3 0.4 L5.6 4.5 L0.3 8.6Z"/></svg>
<div class="ln" style="left:83.0px;top:436px">&lt;<span class="t">box</span> <span class="a">class</span>=&quot;<span class="v">panel-arrowbox</span>&quot; <span class="a">part</span>=&quot;<span class="v">arrowbox</span>&quot; <span class="a">pack</span>=&quot;<span class="v">end</span>&quot; <span class="a">style</span>=&quot;<span class="v">transform: translate(0px);</span>&quot;&gt;</div>
<div class="ln" style="left:83.0px;top:450px"><span class="el"><i></i><i></i><i></i></span>&lt;/<span class="t">box</span>&gt;</div>
<div class="selbg" style="top:464px"></div>
<svg class="tw sw" style="left:73.7px;top:467.6px" width="6" height="9" viewBox="0 0 6 9"><path d="M0.3 0.4 L5.6 4.5 L0.3 8.6Z"/></svg>
<div class="ln sl" style="left:83.0px;top:466px">&lt;<span class="t">html:slot</span> <span><span class="a">part</span>=&quot;<span class="v">content</span>&quot;</span>&gt;<span class="el"><i></i><i></i><i></i></span>&lt;/<span class="t">html:slot</span>&gt;</div>
<div class="ln" style="left:72.0px;top:482px">&lt;/<span class="t">vbox</span>&gt;</div>
<svg class="tw" style="left:51.7px;top:499.6px" width="6" height="9" viewBox="0 0 6 9"><path d="M0.3 0.4 L5.6 4.5 L0.3 8.6Z"/></svg>
<div class="ln" style="left:61.0px;top:498px">&lt;<span class="t">box</span> <span class="a">class</span>=&quot;<span class="v">panel-header</span>&quot;&gt;<span class="el"><i></i><i></i><i></i></span>&lt;/<span class="t">box</span>&gt; <span class="bd" style="padding:0 3.6px">flex</span></div>
<div class="ln" style="left:61.0px;top:514px">&lt;<span class="t">toolbarseparator</span> <span class="a">id</span>=&quot;<span class="v">editBookmarkHeaderSeparator</span>&quot;&gt;&lt;/<span class="t">toolbarseparator</span>&gt;</div>
<svg class="tw" style="left:51.7px;top:531.6px" width="6" height="9" viewBox="0 0 6 9"><path d="M0.3 0.4 L5.6 4.5 L0.3 8.6Z"/></svg>
<div class="ln" style="left:61.0px;top:530px">&lt;<span class="t">vbox</span> <span class="a">class</span>=&quot;<span class="v">panel-subview-body</span>&quot;&gt;<span class="el"><i></i><i></i><i></i></span>&lt;/<span class="t">vbox</span>&gt;</div>
<div class="ln" style="left:50.0px;top:546px">&lt;/<span class="t">panel</span>&gt;</div>
<svg class="tw" style="left:40.7px;top:563.6px" width="6" height="9" viewBox="0 0 6 9"><path d="M0.3 0.4 L5.6 4.5 L0.3 8.6Z"/></svg>
<div class="ln hd" style="left:50.0px;top:562px">&lt;<span class="t">html:template</span> <span class="a">id</span>=&quot;<span class="v">UITourTooltipTemplate</span>&quot;&gt;<span class="el"><i></i><i></i><i></i></span>&lt;/<span class="t">html:template</span>&gt;</div>
<div class="rbx" style="left:89.2px;top:343.3px;width:137.3px;height:16.8px"></div>
<div class="rbx" style="left:58.2px;top:402.4px;width:119.7px;height:16.3px;border-style:dotted"></div>
<div class="rbx" style="left:146.1px;top:463.1px;width:87px;height:17.3px;border-width:2.2px"></div>
</div></div>
<div id="dsb"></div><div id="dth"></div>
<svg style="left:635.500px;top:87px" width="10" height="7" viewBox="0 0 10 7" fill="none" stroke="#fff" stroke-width="1.800"><path d="M1 6l4-4.200L9 6"/></svg>

</div>
</body></html>
